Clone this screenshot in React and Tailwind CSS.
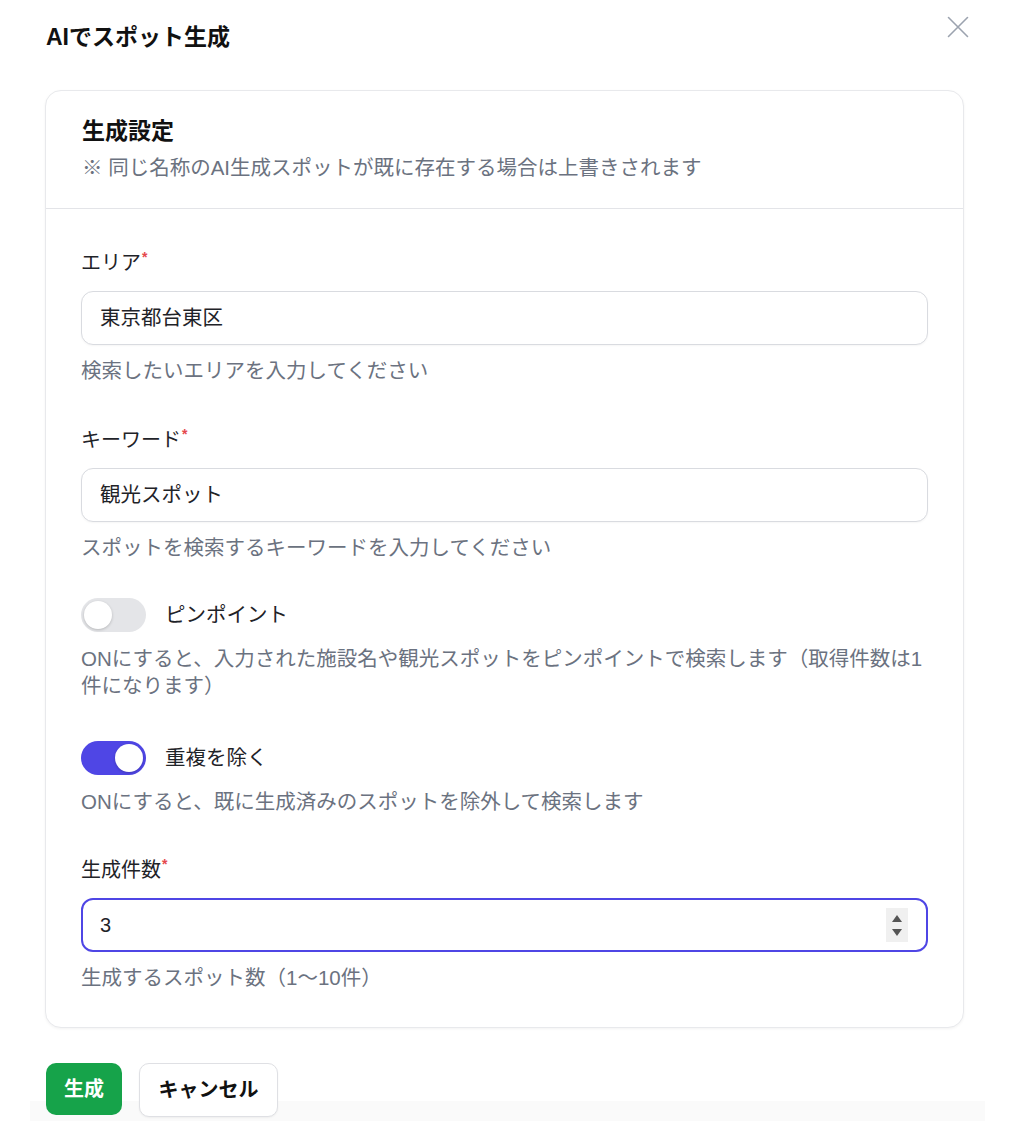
import React from "react";

const FONT = { fontFamily: '"Liberation Sans", "Noto Sans CJK JP", sans-serif' };

function Label({ children }) {
  return (
    <div className="text-[20px] leading-[28px] text-[#1f2328]">
      {children}
      <span className="relative -top-[8px] ml-[1px] text-[14px] font-bold text-[#e5484d]">*</span>
    </div>
  );
}

function Help({ children }) {
  return <div className="text-[20.5px] leading-[27px] text-[#6b7280]">{children}</div>;
}

function TextField({ label, value, help }) {
  return (
    <div className="flex flex-col">
      <Label>{label}</Label>
      <div className="mt-[12px] flex h-[54px] items-center rounded-[12px] border border-[#d9dbe0] bg-white px-[18px] text-[20.5px] text-[#1f2328] shadow-[0_1px_2px_rgba(0,0,0,0.04)]">
        {value}
      </div>
      <div className="mt-[12px]">
        <Help>{help}</Help>
      </div>
    </div>
  );
}

function Toggle({ on, label, help }) {
  return (
    <div className="flex flex-col">
      <div className="flex items-center gap-[19px]">
        <div
          className={
            on
              ? "flex h-[34px] w-[65px] items-center justify-end rounded-full bg-[#4f46e5] p-[3px]"
              : "flex h-[34px] w-[65px] items-center justify-start rounded-full bg-[#e4e5e8] p-[3px]"
          }
        >
          <div className="h-[28px] w-[28px] rounded-full bg-white shadow-[0_1px_3px_rgba(0,0,0,0.2)]" />
        </div>
        <div className="text-[20.5px] leading-[28px] text-[#1f2328]">{label}</div>
      </div>
      <div className="mt-[13px]">{help}</div>
    </div>
  );
}

export default function App() {
  return (
    <div className="min-h-[1138px] w-[1016px] bg-white" style={FONT}>
      <div className="flex items-start justify-between pl-[46px] pr-[47px] pt-[16px]">
        <h1 className="mt-[5px] text-[23px] font-bold leading-[32px] text-[#111]">AIでスポット生成</h1>
        <svg width="22" height="22" viewBox="0 0 22 22" fill="none" stroke="#9ca3af" strokeWidth="1.6" strokeLinecap="round">
          <path d="M1.5 1.5 L20.5 20.5 M20.5 1.5 L1.5 20.5" />
        </svg>
      </div>

      <div className="ml-[45px] mt-[37px] w-[919px] rounded-[16px] border border-[#e8e9ec] bg-white shadow-[0_1px_3px_rgba(0,0,0,0.05)]">
        <div className="border-b border-[#e3e4e8] px-[36px] pb-[26px] pt-[24px]">
          <div className="text-[23px] font-bold leading-[32px] text-[#111]">生成設定</div>
          <div className="mt-[7px] text-[20.5px] leading-[28px] text-[#6b7280]">
            ※ 同じ名称のAI生成スポットが既に存在する場合は上書きされます
          </div>
        </div>

        <div className="flex flex-col px-[35px] pb-[36px] pt-[40px]">
          <TextField label="エリア" value="東京都台東区" help="検索したいエリアを入力してください" />
          <div className="mt-[42px]">
            <TextField label="キーワード" value="観光スポット" help="スポットを検索するキーワードを入力してください" />
          </div>
          <div className="mt-[37px]">
            <Toggle
              on={false}
              label="ピンポイント"
              help={
                <Help>
                  ONにすると、入力された施設名や観光スポットをピンポイントで検索します（取得件数は1
                  <br />
                  件になります）
                </Help>
              }
            />
          </div>
          <div className="mt-[42px]">
            <Toggle
              on={true}
              label="重複を除く"
              help={<Help>ONにすると、既に生成済みのスポットを除外して検索します</Help>}
            />
          </div>
          <div className="mt-[41px] flex flex-col">
            <Label>生成件数</Label>
            <div className="mt-[12px] flex h-[54px] items-center justify-between rounded-[12px] border-2 border-[#4f46e5] bg-white pl-[17px] pr-[18px] text-[20px] text-[#1f2328]">
              <span>3</span>
              <div className="flex h-[34px] w-[22px] flex-col items-center justify-center gap-[7px] bg-[#f0f0f0]">
                <svg width="10" height="7" viewBox="0 0 10 7"><path d="M5 0 L10 7 L0 7 Z" fill="#555" /></svg>
                <svg width="10" height="7" viewBox="0 0 10 7"><path d="M0 0 L10 0 L5 7 Z" fill="#555" /></svg>
              </div>
            </div>
            <div className="mt-[12px]">
              <Help>生成するスポット数（1〜10件）</Help>
            </div>
          </div>
        </div>
      </div>

      <div className="relative z-10 ml-[46px] mt-[35px] flex gap-[17px]">
        <button className="flex h-[52px] w-[76px] items-center justify-center rounded-[10px] bg-[#16a34a] text-[20px] font-bold text-white">
          生成
        </button>
        <button className="flex h-[54px] w-[139px] items-center justify-center rounded-[10px] border border-[#dfe0e4] bg-white text-[20px] font-bold text-[#111] shadow-[0_1px_2px_rgba(0,0,0,0.05)]">
          キャンセル
        </button>
      </div>
      <div className="-mt-[16px] ml-[30px] h-[20px] w-[955px] bg-[#fafafa]" />
    </div>
  );
}
